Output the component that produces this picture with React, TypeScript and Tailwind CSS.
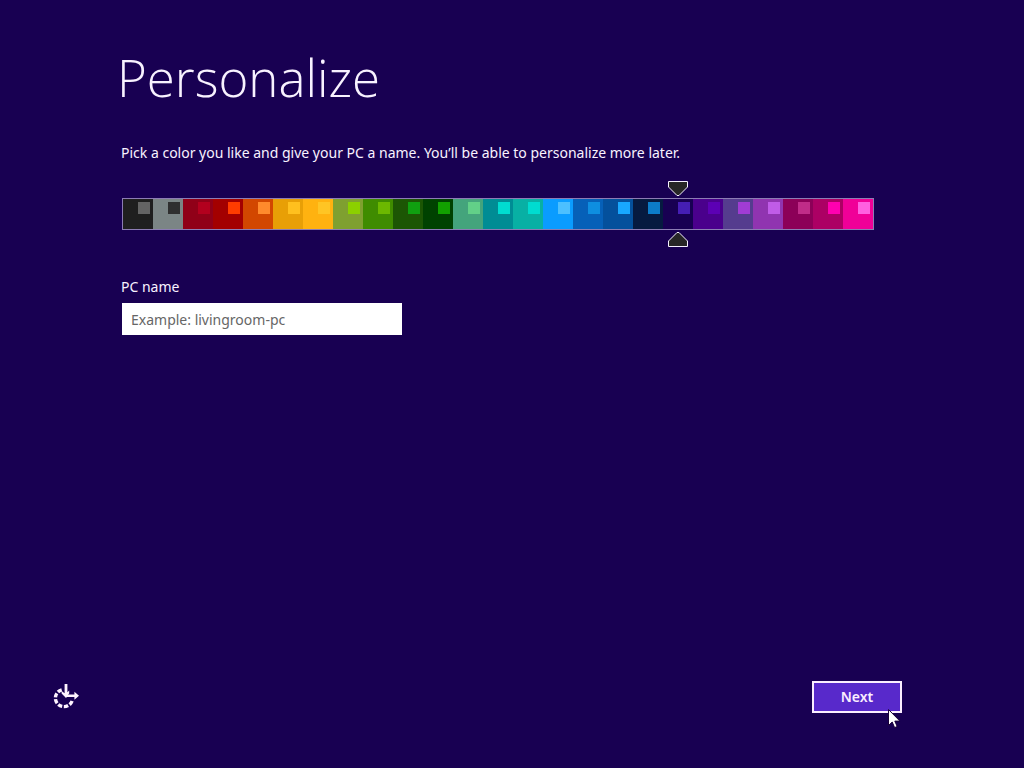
import { useState } from "react";

type Swatch = { name: string; base: string; accent: string };

const swatches: Swatch[] = [
  { name: "Black", base: "bg-[#1f1f1f]", accent: "bg-[#646464]" },
  { name: "Gray", base: "bg-[#7b8585]", accent: "bg-[#2f2f2f]" },
  { name: "Crimson", base: "bg-[#900018]", accent: "bg-[#b3001e]" },
  { name: "Red", base: "bg-[#a30000]", accent: "bg-[#ff3c00]" },
  { name: "Rust", base: "bg-[#d24700]", accent: "bg-[#ff8a2c]" },
  { name: "Amber", base: "bg-[#e89f06]", accent: "bg-[#ffc01e]" },
  { name: "Yellow", base: "bg-[#ffb210]", accent: "bg-[#ffc524]" },
  { name: "Olive", base: "bg-[#7fa030]", accent: "bg-[#8cd000]" },
  { name: "Green", base: "bg-[#3f8c00]", accent: "bg-[#6cb800]" },
  { name: "Forest", base: "bg-[#1c5604]", accent: "bg-[#10a010]" },
  { name: "Dark green", base: "bg-[#004200]", accent: "bg-[#12a000]" },
  { name: "Sea green", base: "bg-[#44a47c]", accent: "bg-[#62d088]" },
  { name: "Dark teal", base: "bg-[#008c94]", accent: "bg-[#00dcd0]" },
  { name: "Teal", base: "bg-[#08b0a4]", accent: "bg-[#00dcd0]" },
  { name: "Sky", base: "bg-[#0a9cff]", accent: "bg-[#4cc0ff]" },
  { name: "Blue", base: "bg-[#0660b8]", accent: "bg-[#0e8ee0]" },
  { name: "Cobalt", base: "bg-[#04509c]", accent: "bg-[#18a8ff]" },
  { name: "Navy", base: "bg-[#061a40]", accent: "bg-[#0c7cc8]" },
  { name: "Indigo", base: "bg-[#180052]", accent: "bg-[#451eb4]" },
  { name: "Violet", base: "bg-[#4a008c]", accent: "bg-[#5c00b4]" },
  { name: "Slate purple", base: "bg-[#553c8e]", accent: "bg-[#a03cd4]" },
  { name: "Purple", base: "bg-[#9034b0]", accent: "bg-[#c05ce8]" },
  { name: "Plum", base: "bg-[#8c0058]", accent: "bg-[#c02c88]" },
  { name: "Magenta", base: "bg-[#ac0064]", accent: "bg-[#ff00b0]" },
  { name: "Pink", base: "bg-[#f00098]", accent: "bg-[#ff60e0]" },
];

function Marker({ className }: { className: string }) {
  return (
    <svg className={className} width="20" height="15" viewBox="0 0 20 15" aria-hidden="true">
      <path d="M.5.5h19v5.5l-8.5 8.5h-2L.5 6z" fill="#262626" stroke="#f4efff" />
    </svg>
  );
}

function ColorPicker() {
  const [selected, setSelected] = useState("Indigo");
  return (
    <fieldset aria-label="Color" className="mt-[35px] flex w-fit border border-[#8c7cb4]">
      {swatches.map((s) => (
        <label key={s.name} className={`relative flex h-[30px] w-[30px] justify-end pt-[3px] pr-[3px] ${s.base}`}>
          <input
            type="radio"
            name="color"
            aria-label={s.name}
            checked={selected === s.name}
            onChange={() => setSelected(s.name)}
            className="absolute inset-0 m-0 h-full w-full cursor-default appearance-none"
          />
          <span className={`h-3 w-3 ${s.accent}`} />
          {selected === s.name && (
            <>
              <Marker className="absolute -top-[18px] left-[5px]" />
              <Marker className="absolute -bottom-[18px] left-[5px] rotate-180" />
            </>
          )}
        </label>
      ))}
    </fieldset>
  );
}

function EaseOfAccessIcon() {
  return (
    <svg width="26" height="26" viewBox="0 0 26 26" aria-hidden="true">
      <path
        d="M19.1 17A8.6 8.6 0 1 1 10.2 5.5"
        fill="none"
        stroke="#fff4ff"
        strokeWidth="3.4"
        strokeDasharray="4.4 1.7"
      />
      <path
        d="M11.6 0h2.8v8.2l1.8-1.6v3l-1.2 1h6.4V7.8l4.6 4-4.6 4v-2.7h-7.6l-.8.8-4.4-4.4V7l3 2.2z"
        fill="#fff4ff"
      />
    </svg>
  );
}

export default function App() {
  return (
    <div className="flex min-h-screen flex-col bg-[#180052] font-['Noto_Sans','Open_Sans',sans-serif] text-[#f8f2ff]">
      <main className="flex-1 px-[121px] pt-[45px]">
        <h1 className="-ml-1 font-['Open_Sans','Noto_Sans',sans-serif] text-[51px] leading-[64px] font-light">
          Personalize
        </h1>
        <p className="mt-[34px] text-sm leading-5">
          Pick a color you like and give your PC a name. You’ll be able to personalize more later.
        </p>
        <div className="pl-px">
          <ColorPicker />
        </div>
        <div className="mt-[47px] flex flex-col items-start gap-[6px]">
          <label htmlFor="pc-name" className="text-sm leading-5">
            PC name
          </label>
          <div className="pl-px">
            <input
              id="pc-name"
              type="text"
              placeholder="Example: livingroom-pc"
              className="block h-8 w-[280px] bg-white px-[9px] text-sm text-black outline-none placeholder:text-[#666666]"
            />
          </div>
        </div>
      </main>
      <footer className="flex items-center justify-between pr-[122px] pb-[55px] pl-[53px]">
        <button type="button" aria-label="Ease of access">
          <EaseOfAccessIcon />
        </button>
        <div className="relative">
          <button
            type="button"
            className="h-8 w-[90px] border-2 border-[#fbeeff] bg-[#5829cb] text-sm font-semibold text-[#fbeeff]"
          >
            Next
          </button>
          <svg
            className="pointer-events-none absolute top-7 left-[76px]"
            width="13"
            height="20"
            viewBox="0 0 13 20"
            aria-hidden="true"
          >
            <path d="M.5.5v16l3.7-3.5 2.4 5.6 2.6-1.1-2.4-5.4h5.1z" fill="#fff" stroke="#180038" />
          </svg>
        </div>
      </footer>
    </div>
  );
}
